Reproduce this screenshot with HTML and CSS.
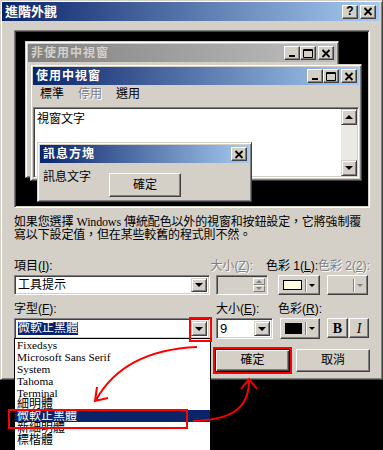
FILE: index.html
```html
<!DOCTYPE html>
<html lang="zh-Hant">
<head>
  <meta charset="UTF-8">
  <title>進階外觀</title>
  <link rel="stylesheet" href="styles.css">
</head>
<body>
  <div class="dialog">
    <div class="titlebar">
      <span class="title">進階外觀</span>
      <span class="cap-btns">
        <span class="cap-btn help">?</span>
        <span class="cap-btn">
          <svg width="10" height="9" viewBox="0 0 10 9"><path d="M1.5 1l7 7M8.5 1l-7 7" stroke="#000" stroke-width="1.8" fill="none"/></svg>
        </span>
      </span>
    </div>

    <div class="content">
      <!-- 預覽區 -->
      <div class="preview">
        <div class="win inactive">
          <div class="wtitle">
            <span>非使用中視窗</span>
            <span class="wbtns">
              <span class="cap-btn"><svg width="10" height="9" viewBox="0 0 10 9"><rect x="2" y="6" width="6" height="2"/></svg></span>
              <span class="cap-btn"><svg width="10" height="9" viewBox="0 0 10 9"><path d="M0.5 0.5h9v8h-9z M0 1.5h10" fill="none" stroke="#000"/></svg></span>
              <span class="cap-btn last"><svg width="10" height="9" viewBox="0 0 10 9"><path d="M1.5 1l7 7M8.5 1l-7 7" stroke="#000" stroke-width="1.8" fill="none"/></svg></span>
            </span>
          </div>
        </div>

        <div class="win active">
          <div class="wtitle">
            <span>使用中視窗</span>
            <span class="wbtns">
              <span class="cap-btn"><svg width="10" height="9" viewBox="0 0 10 9"><rect x="2" y="6" width="6" height="2"/></svg></span>
              <span class="cap-btn"><svg width="10" height="9" viewBox="0 0 10 9"><path d="M0.5 0.5h9v8h-9z M0 1.5h10" fill="none" stroke="#000"/></svg></span>
              <span class="cap-btn last"><svg width="10" height="9" viewBox="0 0 10 9"><path d="M1.5 1l7 7M8.5 1l-7 7" stroke="#000" stroke-width="1.8" fill="none"/></svg></span>
            </span>
          </div>
          <div class="menu">
            <span>標準</span>
            <span class="disabled">停用</span>
            <span>選用</span>
          </div>
          <div class="textarea">
            <div class="txt">視窗文字</div>
            <div class="scroll">
              <span class="sbtn"><i class="tri-up"></i></span>
              <span class="sbtn"><i class="tri-down"></i></span>
            </div>
          </div>
        </div>

        <div class="win msg">
          <div class="wtitle">
            <span>訊息方塊</span>
            <span class="cap-btn"><svg width="10" height="9" viewBox="0 0 10 9"><path d="M1.5 1l7 7M8.5 1l-7 7" stroke="#000" stroke-width="1.8" fill="none"/></svg></span>
          </div>
          <div class="msgbody">
            <span class="msgtext">訊息文字</span>
            <span class="btn msgbtn">確定</span>
          </div>
        </div>
      </div>

      <p class="desc">如果您選擇 <span class="latin">Windows</span> 傳統配色以外的視窗和按鈕設定，它將強制覆<br>寫以下設定值，但在某些較舊的程式則不然。</p>

      <!-- 項目 -->
      <div class="lrow">
        <span class="l1">項目(<u>I</u>):</span>
        <span class="l2 disabled">大小(<u>Z</u>):</span>
        <span class="l3">色彩 1(<u>L</u>):</span>
        <span class="disabled">色彩 2(<u>2</u>):</span>
      </div>
      <div class="crow row1">
        <div class="field combo c-item">
          <span class="ctext">工具提示</span>
          <span class="dropbtn"><i class="tri-down"></i></span>
        </div>
        <div class="field spin">
          <span class="spinbtns">
            <span class="spinbtn"><i class="tri-up small grey"></i></span>
            <span class="spinbtn"><i class="tri-down small grey"></i></span>
          </span>
        </div>
        <div class="btn colorbtn c1">
          <span class="swatch light"></span>
          <span class="sep"></span>
          <i class="tri-down small"></i>
        </div>
        <div class="btn colorbtn c2 off">
          <span class="sep"></span>
          <i class="tri-down small grey"></i>
        </div>
      </div>

      <!-- 字型 -->
      <div class="lrow">
        <span class="l1">字型(<u>F</u>):</span>
        <span class="l2b">大小(<u>E</u>):</span>
        <span>色彩(<u>R</u>):</span>
      </div>
      <div class="crow row2">
        <div class="field combo c-item">
          <span class="ctext"><span class="sel">微軟正黑體</span></span>
          <span class="dropbtn"><i class="tri-down"></i></span>
        </div>
        <div class="field combo c-size">
          <span class="ctext num">9</span>
          <span class="dropbtn"><i class="tri-down"></i></span>
        </div>
        <div class="btn colorbtn c3">
          <span class="swatch dark"></span>
          <span class="sep"></span>
          <i class="tri-down small"></i>
        </div>
        <div class="btn fmt bold">B</div>
        <div class="btn fmt ital">I</div>
      </div>

      <div class="brow">
        <span class="btn default ok">確定</span>
        <span class="btn cancel">取消</span>
      </div>
    </div>
  </div>

  <!-- 下拉清單 -->
  <div class="droplist">
    <div class="li latin">Fixedsys</div>
    <div class="li latin">Microsoft Sans Serif</div>
    <div class="li latin">System</div>
    <div class="li latin">Tahoma</div>
    <div class="li latin">Terminal</div>
    <div class="li">細明體</div>
    <div class="li picked">微軟正黑體</div>
    <div class="li">新細明體</div>
    <div class="li">標楷體</div>
  </div>

  <!-- 紅框與箭頭 -->
  <div class="mark m-drop"></div>
  <div class="mark m-item"></div>
  <div class="mark m-ok"></div>
  <svg class="arrows" width="383" height="450" viewBox="0 0 383 450">
    <path d="M197 347C152 349 116 364 96 400M97 387L95 401L108 398" />
    <path d="M193 421C226 420 249 412 249 381M241 389L249 379L257 389" />
  </svg>
</body>
</html>
```

FILE: styles.css
```css
body {
  margin: 0;
  width: 383px;
  height: 450px;
  position: relative;
  overflow: hidden;
  background: #000;
  font-family: "Liberation Sans", "Noto Sans CJK TC", sans-serif;
  font-size: 12px;
  line-height: 13px;
  color: #000;
}
u {
  text-decoration: underline;
}

/* 視窗外框 */
.dialog {
  width: 383px;
  height: 380px;
  box-sizing: border-box;
  background: #d4d0c8;
  border: 1px solid;
  border-color: #d4d0c8 #404040 #404040 #d4d0c8;
  box-shadow: inset 1px 1px #fff, inset -1px -1px #808080;
  padding: 1px 3px 0 1px;
}
.titlebar {
  height: 19px;
  display: flex;
  align-items: center;
  justify-content: space-between;
  padding: 0 3px 0 3px;
  background: linear-gradient(90deg, #0a246a, #a6caf0);
}
.title {
  color: #fff;
  font-weight: bold;
  font-size: 13px;
}
.cap-btns {
  display: flex;
  gap: 2px;
}
.cap-btn {
  width: 16px;
  height: 14px;
  box-sizing: border-box;
  display: flex;
  align-items: center;
  justify-content: center;
  background: #d4d0c8;
  border: 1px solid;
  border-color: #fff #404040 #404040 #fff;
  box-shadow: inset -1px -1px #808080;
}
.cap-btn.help {
  font-weight: bold;
  font-size: 12px;
  color: #000;
}

.content {
  padding: 9px 9px 0 12px;
}

/* 預覽 */
.preview {
  height: 178px;
  box-sizing: border-box;
  position: relative;
  background: #000;
  border: 1px solid;
  border-color: #808080 #fff #fff #808080;
  box-shadow: inset 1px 1px #404040, inset -1px -1px #d4d0c8;
}
.win {
  position: absolute;
  box-sizing: border-box;
  display: flex;
  flex-direction: column;
  background: #d4d0c8;
  border: 1px solid;
  border-color: #d4d0c8 #404040 #404040 #d4d0c8;
  box-shadow: inset 1px 1px #fff, inset -1px -1px #808080;
  padding: 2px;
}
.inactive {
  left: 10px;
  top: 10px;
  width: 314px;
  height: 137px;
}
.active {
  left: 15px;
  top: 33px;
  width: 332px;
  height: 117px;
}
.msg {
  left: 22px;
  top: 111px;
  width: 215px;
  height: 60px;
}
.wtitle {
  height: 18px;
  flex: none;
  display: flex;
  align-items: center;
  justify-content: space-between;
  padding: 0 2px 0 3px;
  background: linear-gradient(90deg, #0a246a, #a6caf0);
  color: #fff;
  font-weight: bold;
  letter-spacing: 1px;
}
.inactive .wtitle {
  background: linear-gradient(90deg, #808080, #c0c0c0);
  color: #d4d0c8;
}
.wbtns {
  display: flex;
}
.wbtns .last {
  margin-left: 2px;
}
.menu {
  height: 19px;
  flex: none;
  display: flex;
  align-items: center;
}
.menu span {
  padding: 0 7px;
}
.disabled {
  color: #808080;
  text-shadow: 1px 1px #fff;
}
.textarea {
  flex: 1;
  margin-top: 3px;
  display: flex;
  background: #fff;
  border: 1px solid;
  border-color: #808080 #fff #fff #808080;
  box-shadow: inset 1px 1px #404040, inset -1px -1px #d4d0c8;
  padding: 1px;
}
.txt {
  flex: 1;
  padding: 4px 2px;
}
.scroll {
  width: 16px;
  display: flex;
  flex-direction: column;
  justify-content: space-between;
  background: #ebe9e4;
}
.sbtn {
  height: 16px;
  box-sizing: border-box;
  display: flex;
  align-items: center;
  justify-content: center;
  background: #d4d0c8;
  border: 1px solid;
  border-color: #d4d0c8 #404040 #404040 #d4d0c8;
  box-shadow: inset 1px 1px #fff, inset -1px -1px #808080;
}
.msgbody {
  display: flex;
  align-items: flex-start;
}
.msgtext {
  margin: 8px 0 0 3px;
}
.msgbtn {
  width: 72px;
  height: 24px;
  margin: 10px 0 0 18px;
}

/* 三角 */
.tri-down, .tri-up {
  display: block;
  width: 0;
  height: 0;
  border-left: 4px solid transparent;
  border-right: 4px solid transparent;
}
.tri-down {
  border-top: 4px solid #000;
}
.tri-up {
  border-bottom: 4px solid #000;
}
.tri-down.small {
  border-left-width: 3px;
  border-right-width: 3px;
  border-top-width: 3px;
}
.tri-up.small {
  border-left-width: 3px;
  border-right-width: 3px;
  border-bottom-width: 3px;
}
.tri-down.grey {
  border-top-color: #808080;
}
.tri-up.grey {
  border-bottom-color: #808080;
}

/* 說明文字 */
.desc {
  margin: 8px 0 0;
  line-height: 13px;
  white-space: nowrap;
  letter-spacing: -0.15px;
}
.latin {
  font-family: "Liberation Serif", serif;
}

/* 欄位 */
.lrow {
  display: flex;
  height: 13px;
  margin-top: 18px;
  white-space: nowrap;
}
.lrow + .crow + .lrow {
  margin-top: 8px;
}
.l1 {
  width: 202px;
}
.l2 {
  width: 57px;
}
.l2b {
  width: 62px;
}
.l3 {
  width: 52px;
}
.crow {
  display: flex;
  margin-top: 2px;
}
.row1 {
  height: 20px;
}
.row2 {
  height: 21px;
}
.field {
  box-sizing: border-box;
  background: #fff;
  border: 1px solid;
  border-color: #808080 #fff #fff #808080;
  box-shadow: inset 1px 1px #404040, inset -1px -1px #d4d0c8;
  padding: 2px;
}
.combo {
  display: flex;
  align-items: stretch;
}
.ctext {
  flex: 1;
  display: flex;
  align-items: center;
  padding-left: 1px;
  white-space: nowrap;
}
.sel {
  background: #0a246a;
  color: #fff;
}
.num {
  font-size: 13px;
}
.dropbtn {
  width: 16px;
  box-sizing: border-box;
  display: flex;
  align-items: center;
  justify-content: center;
  background: #d4d0c8;
  border: 1px solid;
  border-color: #d4d0c8 #404040 #404040 #d4d0c8;
  box-shadow: inset 1px 1px #fff, inset -1px -1px #808080;
}
.c-item {
  width: 196px;
}
.c-size {
  width: 57px;
  margin-left: 6px;
}
.spin {
  width: 52px;
  margin-left: 6px;
  background: #d4d0c8;
  display: flex;
  justify-content: flex-end;
}
.spinbtns {
  width: 12px;
  display: flex;
  flex-direction: column;
}
.spinbtn {
  flex: 1;
  display: flex;
  align-items: center;
  justify-content: center;
  box-sizing: border-box;
  border: 1px solid;
  border-color: #fff #808080 #808080 #fff;
}

/* 按鈕 */
.btn {
  box-sizing: border-box;
  display: flex;
  align-items: center;
  justify-content: center;
  background: #d4d0c8;
  border: 1px solid;
  border-color: #fff #404040 #404040 #fff;
  box-shadow: inset -1px -1px #808080;
}
.colorbtn {
  padding: 0 4px 0 4px;
}
.c1 {
  width: 42px;
  margin-left: 10px;
}
.c2 {
  width: 41px;
  margin-left: 7px;
  justify-content: flex-end;
}
.c3 {
  width: 40px;
  margin-left: 7px;
}
.swatch {
  width: 23px;
  height: 10px;
  box-sizing: border-box;
  border: 1px solid #000;
}
.swatch.light {
  background: #ffffe1;
}
.swatch.dark {
  width: 22px;
  height: 11px;
  background: #000;
}
.sep {
  width: 1px;
  height: 13px;
  background: #808080;
  box-shadow: 1px 0 #fff;
  margin: 0 3px 0 3px;
}
.fmt {
  height: 20px;
  font-family: "Liberation Serif", serif;
  font-size: 14px;
}
.bold {
  width: 21px;
  margin-left: 7px;
  font-weight: bold;
}
.ital {
  width: 20px;
  margin-left: 1px;
  font-style: italic;
}
.brow {
  display: flex;
  margin-top: 10px;
  height: 23px;
}
.ok {
  width: 75px;
  margin-left: 201px;
}
.default {
  border-color: #000;
  box-shadow: inset 1px 1px #fff, inset -1px -1px #404040, inset -2px -2px #808080;
}
.cancel {
  width: 74px;
  margin-left: 6px;
}

/* 下拉清單 */
.droplist {
  position: absolute;
  left: 14px;
  top: 338px;
  width: 197px;
  height: 114px;
  box-sizing: border-box;
  background: #fff;
  border: 1px solid #000;
  font-family: "Liberation Serif", "Noto Sans CJK TC", serif;
  font-weight: normal;
}
.li {
  height: 11.9px;
  line-height: 12px;
  padding-left: 2px;
  white-space: nowrap;
  font-size: 12px;
}
.li.latin {
  font-size: 11.3px;
}
.li.picked {
  background: #0a246a;
  color: #fff;
}

/* 紅框 */
.mark {
  position: absolute;
  box-sizing: border-box;
  border: 2px solid #f00;
}
.m-drop {
  left: 189px;
  top: 317px;
  width: 23px;
  height: 25px;
}
.m-item {
  left: 8px;
  top: 409px;
  width: 180px;
  height: 20px;
}
.m-ok {
  left: 213px;
  top: 347px;
  width: 79px;
  height: 27px;
}
.arrows {
  position: absolute;
  left: 0;
  top: 0;
  pointer-events: none;
}
.arrows path {
  fill: none;
  stroke: #f00;
  stroke-width: 2;
}
```
